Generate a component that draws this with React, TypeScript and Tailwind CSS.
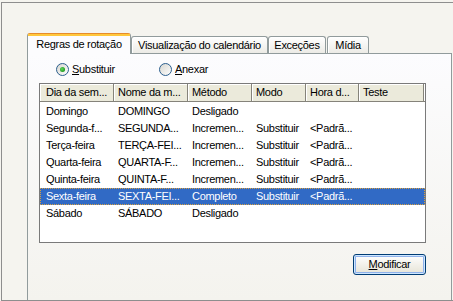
import React from "react";

const cols = [
  { w: "w-[74px]", pl: "pl-[6px]" },
  { w: "w-[74px]", pl: "pl-[4px]" },
  { w: "w-[64px]", pl: "pl-[4px]" },
  { w: "w-[54px]", pl: "pl-[4px]" },
  { w: "w-[53px]", pl: "pl-[4px]" },
  { w: "w-[65px]", pl: "pl-[4px]" },
];

const headers = ["Dia da sem...", "Nome da m...", "Método", "Modo", "Hora d...", "Teste"];

const rows: string[][] = [
  ["Domingo", "DOMINGO", "Desligado", "", "", ""],
  ["Segunda-f...", "SEGUNDA...", "Incremen...", "Substituir", "<Padrã...", ""],
  ["Terça-feira", "TERÇA-FEI...", "Incremen...", "Substituir", "<Padrã...", ""],
  ["Quarta-feira", "QUARTA-F...", "Incremen...", "Substituir", "<Padrã...", ""],
  ["Quinta-feira", "QUINTA-F...", "Incremen...", "Substituir", "<Padrã...", ""],
  ["Sexta-feira", "SEXTA-FEI...", "Completo", "Substituir", "<Padrã...", ""],
  ["Sábado", "SÁBADO", "Desligado", "", "", ""],
];

function Radio({ checked, id }: { checked: boolean; id: string }) {
  return (
    <svg width="13" height="13" viewBox="0 0 13 13" className="shrink-0">
      <defs>
        <linearGradient id={`bg-${id}`} x1="0" y1="0" x2="1" y2="1">
          <stop offset="0" stopColor="#d6d5ce" />
          <stop offset="1" stopColor="#ffffff" />
        </linearGradient>
        <radialGradient id={`dot-${id}`} cx="0.4" cy="0.4" r="0.6">
          <stop offset="0" stopColor="#62d85e" />
          <stop offset="1" stopColor="#1f9a1f" />
        </radialGradient>
      </defs>
      <circle cx="6.5" cy="6.5" r="6" fill={`url(#bg-${id})`} stroke="#2c5f8e" strokeWidth="1" />
      {checked && <circle cx="6.5" cy="6.5" r="2.5" fill={`url(#dot-${id})`} />}
    </svg>
  );
}

export default function App() {
  return (
    <div className="w-[453px] h-[301px] bg-[#f5f4ef] pt-[2px] pl-[1px] overflow-hidden font-['Liberation_Sans',Arial,sans-serif] text-[11px] tracking-[-0.3px] text-black leading-[13px]">
      <div className="h-[299px] border-t border-l border-b border-[#8e8e8e] flex flex-col pl-[25px] pt-[30px]">
        {/* Tab strip */}
        <div className="flex items-end h-[20px] relative z-10">
          <div className="w-[104px] h-[21px] -mb-[1px] bg-[#fcfcfe] border-l border-r border-t border-l-[#919b9c] border-r-[#919b9c] border-t-[#e68b2c] rounded-t-[3px] flex flex-col">
            <div className="h-[2px] bg-[#ffc73c]" />
            <div className="flex-1 flex items-center justify-center pb-[1px]">Regras de rotação</div>
          </div>
          <div className="w-[137px] h-[17px] bg-gradient-to-b from-[#ffffff] to-[#ecebe6] border-t border-l border-r border-[#919b9c] rounded-t-[3px] flex items-center justify-center shadow-[inset_1px_1px_0_#ffffff]">
            Visualização do calendário
          </div>
          <div className="w-[58px] h-[17px] bg-gradient-to-b from-[#ffffff] to-[#ecebe6] border-t border-l border-r border-[#919b9c] rounded-t-[3px] flex items-center justify-center shadow-[inset_1px_1px_0_#ffffff]">
            Exceções
          </div>
          <div className="w-[42px] h-[17px] ml-[1px] bg-gradient-to-b from-[#ffffff] to-[#ecebe6] border-t border-l border-r border-[#919b9c] rounded-t-[3px] flex items-center justify-center shadow-[inset_1px_1px_0_#ffffff]">
            Mídia
          </div>
        </div>
        {/* Panel */}
        <div className="w-[425px] flex-1 border-t border-l border-r border-[#919b9c] bg-gradient-to-b from-[#fcfcfe] to-[#f4f3ee] pt-[9px] pl-[28px] flex flex-col">
          <div className="flex items-center h-[13px]">
            <div className="flex items-center w-[103px]">
              <Radio checked id="a" />
              <span className="ml-[3px]">
                <u>S</u>ubstituir
              </span>
            </div>
            <div className="flex items-center">
              <Radio checked={false} id="b" />
              <span className="ml-[3px]">
                <u>A</u>nexar
              </span>
            </div>
          </div>
          <div className="-ml-[17px] mt-[7px] w-[387px] flex flex-col">
            <div className="h-[160px] border border-[#7a7a7a] bg-white flex flex-col">
              <div className="flex h-[18px] bg-[#ebeadb]">
                {headers.map((h, i) => (
                  <div
                    key={i}
                    className={`${cols[i].w} ${cols[i].pl} h-full flex items-center border-r border-b border-[#85837a] shadow-[inset_1px_1px_0_#ffffff] whitespace-nowrap overflow-hidden`}
                  >
                    {h}
                  </div>
                ))}
                <div className="flex-1 h-full border-b border-[#85837a] shadow-[inset_1px_1px_0_#ffffff]" />
              </div>
              <div className="pt-[1px]">
                {rows.map((r, ri) => {
                  const sel = ri === 5;
                  return (
                    <div
                      key={ri}
                      className={
                        sel
                          ? "flex h-[17px] items-center bg-[#316ac5] text-white outline-1 outline-dotted outline-[#d8a040] -outline-offset-1"
                          : "flex h-[17px] items-center"
                      }
                    >
                      {r.map((c, ci) => (
                        <div key={ci} className={`${cols[ci].w} ${cols[ci].pl} whitespace-nowrap overflow-hidden`}>
                          {c}
                        </div>
                      ))}
                    </div>
                  );
                })}
              </div>
            </div>
            <button className="self-end mt-[11px] w-[73px] h-[21px] rounded-[3px] border border-[#003c74] bg-gradient-to-b from-[#ffffff] to-[#e6e3d6] shadow-[inset_0_0_0_1px_#cee7ff,inset_0_0_0_2px_#8fb1ea] flex items-center justify-center text-black">
              <span>
                <u>M</u>odificar
              </span>
            </button>
          </div>
        </div>
      </div>
    </div>
  );
}
